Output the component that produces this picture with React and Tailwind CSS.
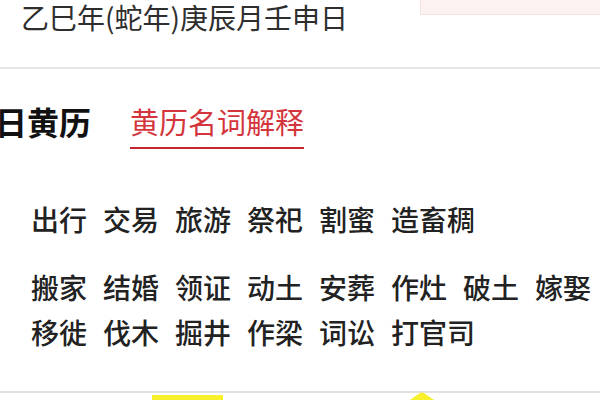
export default function App() {
  const yi = ["出行", "交易", "旅游", "祭祀", "割蜜", "造畜稠"];
  const ji = ["搬家", "结婚", "领证", "动土", "安葬", "作灶", "破土", "嫁娶", "移徙", "伐木", "掘井", "作梁", "词讼", "打官司"];
  const font = { fontFamily: '"Noto Sans CJK SC", "Noto Sans", sans-serif' };
  return (
    <div className="w-[600px] h-[400px] overflow-hidden bg-white relative" style={font}>
      <div className="flex justify-between items-start h-[67px]">
        <div className="pl-[21px] text-[28px] leading-[34px] text-[#2e2e2e]">乙巳年(蛇年)庚辰月壬申日</div>
        <div className="w-[180px] h-[15px] bg-[#fdf2f2] border-l border-b border-[#f6e2e2]"></div>
      </div>
      <div className="h-[2px] bg-[#e6e6e6]"></div>
      <div className="flex items-start mt-[34px]">
        <span className="ml-[-5px] text-[32px] leading-[36px] font-bold text-[#111]">日黄历</span>
        <span className="ml-[39px] text-[29px] leading-[36px] text-[#d4343c] pb-[8px] border-b-2 border-[#c8262e]">黄历名词解释</span>
      </div>
      <div className="mt-[48px] pl-[31px] flex flex-wrap gap-x-[16px] text-[28px] leading-[45px] font-medium text-[#222]">
        {yi.map((w) => (
          <span key={w}>{w}</span>
        ))}
      </div>
      <div className="mt-[23px] pl-[31px] flex flex-wrap gap-x-[16px] text-[28px] leading-[45px] font-medium text-[#222]">
        {ji.map((w) => (
          <span key={w}>{w}</span>
        ))}
      </div>
      <div className="absolute left-0 right-0 top-[391px] h-[2px] bg-[#e3e3e3]"></div>
      <div className="absolute left-[152px] top-[395px] w-[71px] h-[5px] bg-[#f7f02a]"></div>
      <svg className="absolute left-[410px] top-[392px]" width="24" height="8" viewBox="0 0 24 8">
        <path d="M0 8 L10 1 Q12 0 14 1 L24 8 Z" fill="#f7f02a" />
      </svg>
    </div>
  );
}
